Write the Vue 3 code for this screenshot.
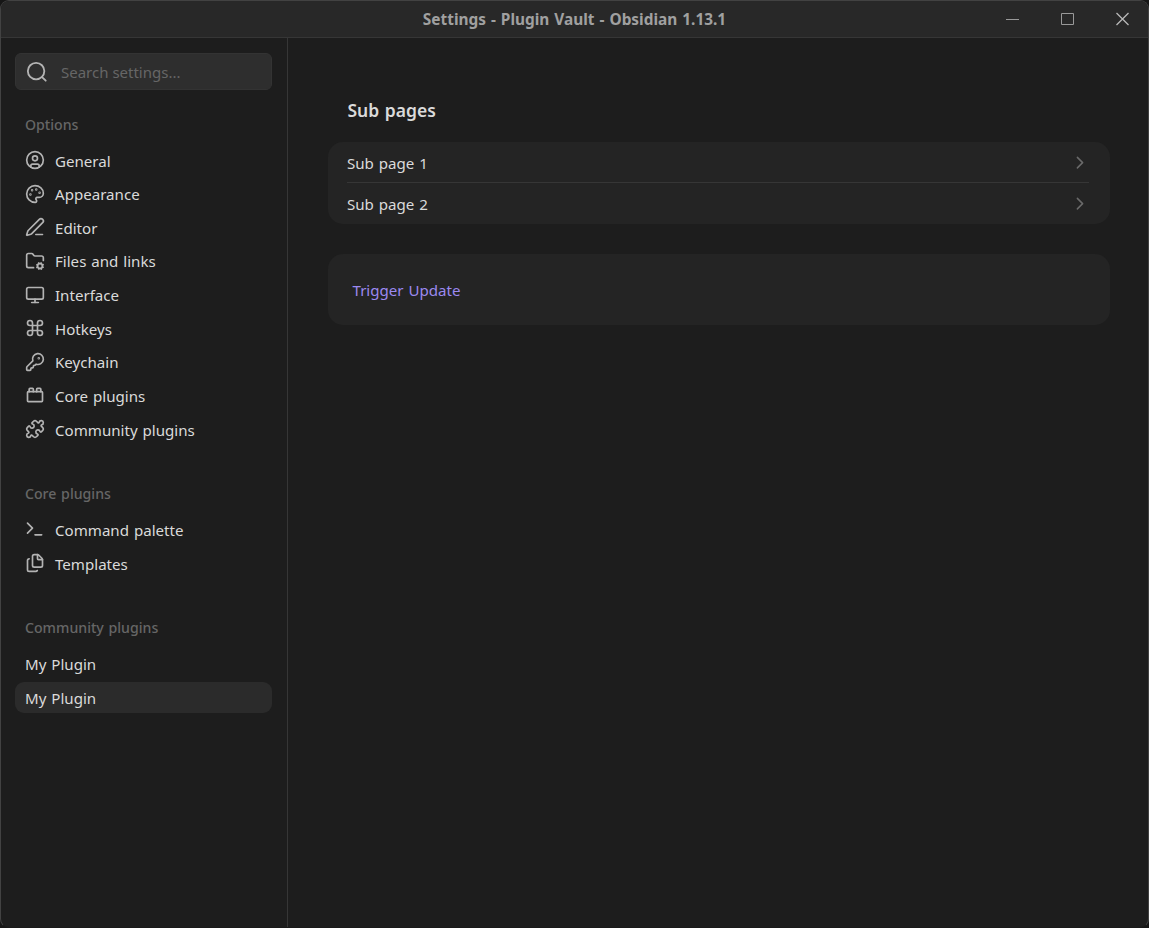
<template>
  <div class="window">
    <header class="titlebar">
      <div class="title"><span>Settings - Plugin Vault - Obsidian 1.13.1</span></div>
      <div class="controls">
        <svg width="55" height="36" viewBox="0 0 55 36"><path d="M23 18.5h13" /></svg>
        <svg width="55" height="36" viewBox="0 0 55 36"><rect x="23.5" y="12.5" width="12" height="11" /></svg>
        <svg class="close" width="55" height="36" viewBox="0 0 55 36"><path d="M23.5 12l12 12M35.5 12l-12 12" /></svg>
      </div>
    </header>

    <div class="body">
      <aside class="sidebar">
        <div class="search">
          <svg class="icon" width="22" height="22" viewBox="0 0 24 24">
            <circle cx="11" cy="11" r="9" />
            <path d="m21.5 21.5-4-4" />
          </svg>
          <span>Search settings...</span>
        </div>

        <nav v-for="group in groups" :key="group.title" class="group">
          <div class="group-title">{{ group.title }}</div>
          <div
            v-for="(item, index) in group.items"
            :key="index"
            class="nav-item"
            :class="{ active: item.active }"
          >
            <svg v-if="item.icon" class="icon" width="20" height="20" viewBox="0 0 24 24">
              <path v-for="(d, i) in icons[item.icon]" :key="i" :d="d" />
            </svg>
            <span>{{ item.label }}</span>
          </div>
        </nav>
      </aside>

      <main class="content">
        <h2>Sub pages</h2>
        <div class="card">
          <div v-for="page in pages" :key="page" class="row">
            <span>{{ page }}</span>
            <svg width="18" height="18" viewBox="0 0 24 24"><path d="m8.5 18.5 7-7-7-7" /></svg>
          </div>
        </div>
        <div class="card action">
          <a>Trigger Update</a>
        </div>
      </main>
    </div>
  </div>
</template>

<script setup>
const pages = ['Sub page 1', 'Sub page 2']

const groups = [
  {
    title: 'Options',
    items: [
      { label: 'General', icon: 'user' },
      { label: 'Appearance', icon: 'palette' },
      { label: 'Editor', icon: 'pen' },
      { label: 'Files and links', icon: 'folder' },
      { label: 'Interface', icon: 'monitor' },
      { label: 'Hotkeys', icon: 'command' },
      { label: 'Keychain', icon: 'key' },
      { label: 'Core plugins', icon: 'brick' },
      { label: 'Community plugins', icon: 'puzzle' }
    ]
  },
  {
    title: 'Core plugins',
    items: [
      { label: 'Command palette', icon: 'terminal' },
      { label: 'Templates', icon: 'files' }
    ]
  },
  {
    title: 'Community plugins',
    items: [{ label: 'My Plugin' }, { label: 'My Plugin', active: true }]
  }
]

const icons = {
  user: [
    'M22 12a10 10 0 1 1-20 0a10 10 0 0 1 20 0z',
    'M15 10a3 3 0 1 1-6 0a3 3 0 0 1 6 0z',
    'M7 20.662V19a2 2 0 0 1 2-2h6a2 2 0 0 1 2 2v1.662'
  ],
  palette: [
    'M12 22a1 1 0 0 1 0-20 10 9 0 0 1 10 9 5 5 0 0 1-5 5h-2.25a1.75 1.75 0 0 0-1.4 2.8l.3.4a1.75 1.75 0 0 1-1.4 2.8z',
    'M13 6.5a.5.5 0 1 0 1 0a.5.5 0 1 0-1 0z',
    'M17 10.5a.5.5 0 1 0 1 0a.5.5 0 1 0-1 0z',
    'M6 12.5a.5.5 0 1 0 1 0a.5.5 0 1 0-1 0z',
    'M8 7.5a.5.5 0 1 0 1 0a.5.5 0 1 0-1 0z'
  ],
  pen: [
    'M13 21h8',
    'M21.174 6.812a1 1 0 0 0-3.986-3.987L3.842 16.174a2 2 0 0 0-.5.83l-1.321 4.352a.5.5 0 0 0 .623.622l4.353-1.32a2 2 0 0 0 .83-.497z'
  ],
  folder: [
    'M10.3 20H4a2 2 0 0 1-2-2V5a2 2 0 0 1 2-2h3.9a2 2 0 0 1 1.69.9l.81 1.2a2 2 0 0 0 1.67.9H20a2 2 0 0 1 2 2v3.3',
    'M21 18a3 3 0 1 1-6 0a3 3 0 0 1 6 0z',
    'm21.7 19.4-.9-.3',
    'm15.2 16.9-.9-.3',
    'm16.6 21.7.3-.9',
    'm19.1 15.2.3-.9',
    'm19.6 21.7-.4-1',
    'm16.8 15.3-.4-1',
    'm14.3 19.6 1-.4',
    'm20.7 16.8 1-.4'
  ],
  monitor: [
    'M4 3h16a2 2 0 0 1 2 2v10a2 2 0 0 1-2 2H4a2 2 0 0 1-2-2V5a2 2 0 0 1 2-2z',
    'M8 21h8',
    'M12 17v4'
  ],
  command: ['M15 6v12a3 3 0 1 0 3-3H6a3 3 0 1 0 3 3V6a3 3 0 1 0-3 3h12a3 3 0 1 0-3-3'],
  key: [
    'M2.586 17.414A2 2 0 0 0 2 18.828V21a1 1 0 0 0 1 1h3a1 1 0 0 0 1-1v-1a1 1 0 0 1 1-1h1a1 1 0 0 0 1-1v-1a1 1 0 0 1 1-1h.172a2 2 0 0 0 1.414-.586l.814-.814a6.5 6.5 0 1 0-4-4z',
    'M16 7.5a.5.5 0 1 0 1 0a.5.5 0 1 0-1 0z'
  ],
  brick: [
    'M4 8h16a1 1 0 0 1 1 1v10a1 1 0 0 1-1 1H4a1 1 0 0 1-1-1V9a1 1 0 0 1 1-1z',
    'M10 8V5c0-.6-.4-1-1-1H6a1 1 0 0 0-1 1v3',
    'M19 8V5c0-.6-.4-1-1-1h-3a1 1 0 0 0-1 1v3'
  ],
  puzzle: [
    'M15.39 4.39a1 1 0 0 0 1.68-.474 2.5 2.5 0 1 1 3.014 3.015 1 1 0 0 0-.474 1.68l1.683 1.682a2.414 2.414 0 0 1 0 3.414L19.61 15.39a1 1 0 0 1-1.68-.474 2.5 2.5 0 1 0-3.014 3.015 1 1 0 0 1 .474 1.68l-1.683 1.682a2.414 2.414 0 0 1-3.414 0L8.61 19.61a1 1 0 0 0-1.68.474 2.5 2.5 0 1 1-3.014-3.015 1 1 0 0 0 .474-1.68l-1.683-1.682a2.414 2.414 0 0 1 0-3.414L4.39 8.61a1 1 0 0 1 1.68.474 2.5 2.5 0 1 0 3.014-3.015 1 1 0 0 1-.474-1.68l1.683-1.682a2.414 2.414 0 0 1 3.414 0z'
  ],
  terminal: ['m3 17 6-6-6-6', 'M12 19h8'],
  files: [
    'M15 2h-4a2 2 0 0 0-2 2v11a2 2 0 0 0 2 2h8a2 2 0 0 0 2-2V8',
    'M16.706 2.706A2.4 2.4 0 0 0 15 2v5a1 1 0 0 0 1 1h5a2.4 2.4 0 0 0-.706-1.706z',
    'M5 7a2 2 0 0 0-2 2v11a2 2 0 0 0 2 2h8a2 2 0 0 0 1.732-1'
  ]
}
</script>

<style>
body {
  margin: 0;
  background: #161616;
}
</style>

<style scoped>
.window {
  box-sizing: border-box;
  height: 928px;
  display: flex;
  flex-direction: column;
  overflow: hidden;
  border: 1px solid #424242;
  border-bottom-color: #1a1a1a;
  border-radius: 9px;
  background: #1d1d1d;
  color: #dadada;
  font-family: "Noto Sans", "Open Sans", sans-serif;
  font-size: 15.1px;
  word-spacing: 1px;
}

svg {
  flex: none;
  fill: none;
  stroke: #b3b3b3;
  stroke-width: 2;
  stroke-linecap: round;
  stroke-linejoin: round;
}

.titlebar {
  display: flex;
  height: 36px;
  flex: none;
  background: #282828;
  border-bottom: 1px solid #363636;
}

.title {
  flex: 1;
  padding-left: 165px;
  text-align: center;
  color: #a0a0a0;
  font-size: 15.4px;
  font-weight: 700;
  line-height: 37px;
}

.controls {
  display: flex;
}

.controls svg {
  stroke: #999;
  stroke-width: 1;
  stroke-linecap: butt;
}

.controls .close {
  stroke: #b8b8b8;
  stroke-width: 1.3;
}

.body {
  display: flex;
  flex: 1;
}

.sidebar {
  box-sizing: border-box;
  width: 287px;
  padding: 15px 15px 0 14px;
  border-right: 1px solid #363636;
}

.search {
  box-sizing: border-box;
  height: 37px;
  display: flex;
  align-items: center;
  gap: 13px;
  padding-left: 10px;
  margin-bottom: 25px;
  border: 1px solid #333;
  border-radius: 6px;
  background: #2e2e2e;
  color: #666;
  font-size: 15px;
  word-spacing: 0;
}

.group {
  margin-bottom: 39.3px;
}

.group-title {
  height: 20px;
  line-height: 20px;
  padding-left: 10px;
  margin-bottom: 10px;
  color: #666;
  font-size: 14.15px;
  font-weight: 500;
}

.nav-item {
  display: flex;
  align-items: center;
  gap: 10px;
  height: 31px;
  margin-bottom: 2.65px;
  padding: 0 10px;
  border-radius: 9px;
}

.nav-item .icon {
  margin-bottom: 1px;
}

.nav-item.active {
  background: #2b2b2b;
}

.content {
  flex: 1;
  padding: 58px 38px 0 40px;
}

h2 {
  margin: 0 0 17px 19.5px;
  font-size: 17.5px;
  line-height: 29px;
  font-weight: 600;
}

.card {
  padding: 0 21px 0 19px;
  border-radius: 15px;
  background: #242424;
}

.row {
  display: flex;
  align-items: center;
  justify-content: space-between;
  height: 41px;
}

.row svg {
  stroke: #6a6a6a;
}

.row + .row {
  box-shadow: 0 -1px #363636;
}

.action {
  display: flex;
  align-items: center;
  height: 71px;
  margin-top: 30px;
  padding-left: 24.5px;
}

.action a {
  color: #9b89f0;
}
</style>
